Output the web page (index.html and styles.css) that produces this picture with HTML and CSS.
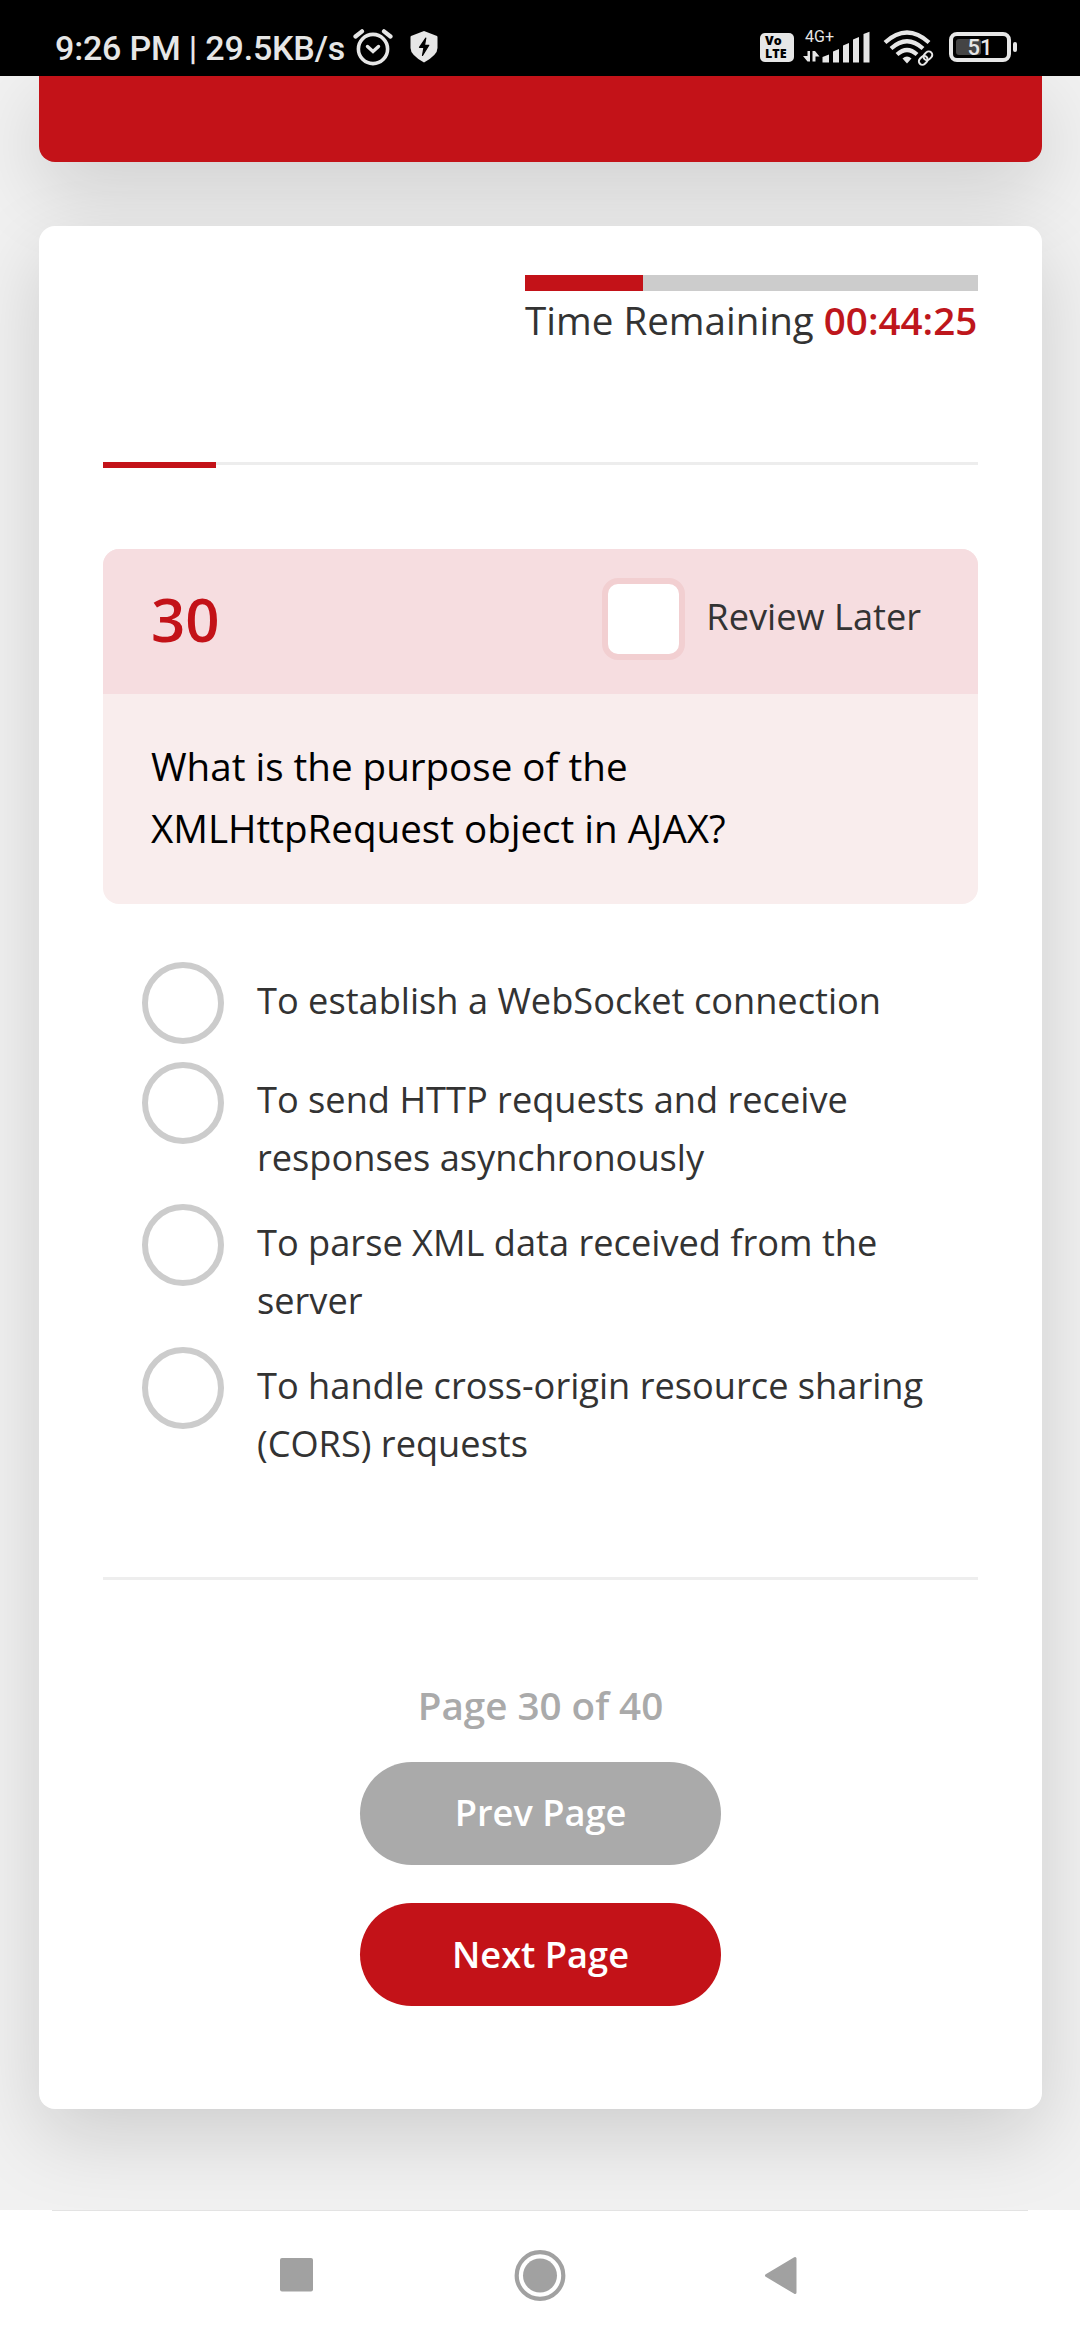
FILE: index.html
```html
<!DOCTYPE html>
<html lang="en">
<head>
<meta charset="utf-8">
<title>Quiz</title>
<link rel="stylesheet" href="styles.css">
</head>
<body>
<header class="status">
  <div class="status-left">
    <span class="clock">9:26 PM | 29.5KB/s</span>
    <svg class="alarm" width="40" height="40" viewBox="0 0 40 40" fill="none" stroke="#e6e6e6">
      <circle cx="20" cy="21" r="14.6" stroke-width="3.6"/>
      <path d="M2.5 8.5L9 3.3M37.500 8.500L31 3.300" stroke-width="4.200" stroke-linecap="round"/>
      <path d="M14.500 18.500L20 23.500L25.500 18.500" stroke-width="3.400" stroke-linecap="round"/>
    </svg>
    <svg class="shield" width="28" height="34" viewBox="0 0 28 34">
      <path d="M14 1L27 6Q27.500 6.300 27.500 7.500V18Q27.500 25 14 32.500Q.5 25 .5 18V7.500Q.5 6.300 1 6Z" fill="#e6e6e6"/>
      <path d="M15.800 8L9.500 17.300H14L12.500 25.500L18.800 15.300H14.500Z" fill="#000" stroke="#000" stroke-width="1.200" stroke-linejoin="round"/>
    </svg>
  </div>
  <div class="status-right">
    <div class="volte"><span>Vo</span><span>LTE</span></div>
    <div class="cell">
      <span class="net">4G+</span>
      <svg width="68" height="36" viewBox="0 0 68 36" fill="#e6e6e6">
        <path d="M0 26L4.500 26V21H7V31.500H4.500Z M9.500 21H12L16.500 26.500H12.500V31.500H9.500Z"/>
        <path d="M19.500 27L26 24.500V32.500H19.500Z M30 21.500L36 19V32.500H30Z M40 15.500L46 13V32.500H40Z M50 9.500L56 7V32.500H50Z M60.500 4L66.500 1.800V32.500H60.500Z"/>
      </svg>
    </div>
    <svg class="wifi" width="52" height="38" viewBox="0 0 52 38" fill="none" stroke="#e6e6e6" stroke-width="4.200">
      <path d="M2 13.500Q24-6.500 46 13.500"/>
      <path d="M8 19.500Q24 5 40 19.500"/>
      <path d="M14 25.500Q24 16.500 34 25.500"/>
      <path d="M19.500 29.500Q24 25.500 28.500 29.500L24 34.500Z" fill="#e6e6e6" stroke="none"/>
      <g stroke="#000" stroke-width="6"><path d="M40 30L45 24"/></g>
      <g stroke-width="2" transform="rotate(-45 42.500 29)">
        <rect x="34.500" y="25.600" width="9.500" height="7" rx="3.500"/>
        <rect x="41" y="25.600" width="9.500" height="7" rx="3.500"/>
      </g>
    </svg>
    <div class="battery"><div class="shell"><div class="charge"></div><span>51</span></div><i class="tip"></i></div>
  </div>
</header>
<main class="page">
  <section class="banner"></section>
  <section class="card">
    <div class="timer">
      <div class="timer-track"><div class="timer-fill" style="width:26%"></div></div>
      <p class="timer-text">Time Remaining <b>00:44:25</b></p>
    </div>
    <div class="progress"><div class="progress-fill" style="width:12.9%"></div></div>
    <div class="question">
      <div class="question-head">
        <span class="number">30</span>
        <label class="review"><span class="checkbox"></span><span class="review-text">Review Later</span></label>
      </div>
      <p class="question-text">What is the purpose of the<br>XMLHttpRequest object in AJAX?</p>
    </div>
    <ul class="options">
      <li><span class="radio"></span><span class="answer">To establish a WebSocket connection</span></li>
      <li><span class="radio"></span><span class="answer">To send HTTP requests and receive<br>responses asynchronously</span></li>
      <li><span class="radio"></span><span class="answer">To parse XML data received from the<br>server</span></li>
      <li><span class="radio"></span><span class="answer">To handle cross-origin resource sharing<br>(CORS) requests</span></li>
    </ul>
    <div class="pager">
      <p class="page-count">Page 30 of 40</p>
      <button class="btn prev">Prev Page</button>
      <button class="btn next">Next Page</button>
    </div>
  </section>
</main>
<nav class="nav">
  <div class="nav-line"></div>
  <div class="nav-buttons">
    <svg width="52" height="52" viewBox="0 0 52 52"><rect x="10" y="9" width="33" height="33.500" rx="2" fill="#a1a1a1"/></svg>
    <svg width="52" height="52" viewBox="0 0 52 52"><circle cx="26" cy="26.500" r="23.300" fill="none" stroke="#a1a1a1" stroke-width="4.200"/><circle cx="26" cy="26.500" r="17" fill="#a1a1a1"/></svg>
    <svg width="52" height="52" viewBox="0 0 52 52"><path d="M8.500 26.500L37 9.500V43.500Z" fill="#a1a1a1" stroke="#a1a1a1" stroke-width="3" stroke-linejoin="round"/></svg>
  </div>
</nav>
</body>
</html>
```
FILE: styles.css
```css
* { box-sizing: border-box; }
body {
  margin: 0;
  width: 1080px;
  height: 2340px;
  overflow: hidden;
  display: flex;
  flex-direction: column;
  background: #f1f1f1;
  color: #333;
  font-family: "Open Sans", "Noto Sans", sans-serif;
}
p, ul { margin: 0; padding: 0; }

/* status bar */
.status {
  position: relative;
  z-index: 1;
  flex: none;
  height: 76px;
  padding: 28px 63px 0 55px;
  display: flex;
  justify-content: space-between;
  background: #000;
  color: #e6e6e6;
  font-family: Roboto, sans-serif;
}
.status-left, .status-right { display: flex; align-items: flex-start; }
.clock { width: 292px; font-size: 34px; line-height: 41px; font-weight: 500; letter-spacing: -.18px; white-space: nowrap; }
.alarm { margin-left: 6px; }
.shield { margin-left: 17px; margin-top: 2px; }
.volte {
  width: 34px;
  height: 29px;
  margin-top: 5px;
  padding-top: 2px;
  border-radius: 5px;
  background: #e6e6e6;
  color: #000;
  display: flex;
  flex-direction: column;
  font: 800 12.500px/12.500px "Open Sans", sans-serif;
}
.volte span { padding-left: 5px; }
.cell { position: relative; width: 68px; margin-left: 9px; margin-top: 2px; }
.cell svg { display: block; }
.net { position: absolute; left: 2px; top: -1px; font-size: 16px; line-height: 16px; }
.wifi { margin-left: 12px; margin-top: 1px; }
.battery { display: flex; align-items: center; margin-left: 14px; margin-top: 4px; }
.shell {
  position: relative;
  width: 62px;
  height: 30px;
  border: 4px solid #e6e6e6;
  border-radius: 8px;
  text-align: center;
  font-size: 22px;
  line-height: 24px;
  font-weight: 500;
}
.charge { position: absolute; left: 3px; top: 3px; width: 25px; height: 16px; border-radius: 3px; background: #444; }
.shell span { position: relative; }
.tip { width: 4px; height: 10px; margin-left: 2px; border-radius: 2px; background: #e6e6e6; }

/* quiz page */
.page { flex: none; height: 2134px; padding: 0 38px 0 39px; overflow: hidden; }
.banner {
  height: 86px;
  border-radius: 0 0 16px 16px;
  background: #c31218;
  box-shadow: 0 27px 80px rgba(0, 0, 0, .15);
}
.card {
  height: 1883px;
  margin-top: 64px;
  padding: 49px 64px 0;
  border-radius: 16px;
  background: #fff;
  box-shadow: 0 27px 80px rgba(0, 0, 0, .15);
}
.timer { width: 453px; height: 187px; margin-left: auto; }
.timer-track { height: 16px; background: #ccc; }
.timer-fill { height: 16px; background: #c31218; }
.timer-text { font-size: 38.600px; line-height: 59px; white-space: nowrap; }
.timer-text b { font-weight: 600; color: #be161c; }
.progress { height: 3px; background: #ededed; }
.progress-fill { height: 6px; background: #c31218; }
.question { height: 355px; margin-top: 84px; border-radius: 16px; overflow: hidden; background: #f9eded; color: #000; }
.question-head {
  height: 145px;
  padding: 0 57px 0 48px;
  display: flex;
  justify-content: space-between;
  background: #f6dde0;
}
.number { font-size: 60px; line-height: 140px; font-weight: 600; color: #c31218; }
.review { display: flex; padding-top: 29px; color: #333; }
.checkbox { width: 83px; height: 82px; border: 6px solid #f2cfd1; border-radius: 16px; background: #fff; }
.review-text { margin-left: 21px; font-size: 36.200px; line-height: 76px; white-space: nowrap; }
.question-text { padding: 41px 48px 0; font-size: 38.550px; line-height: 62px; }
.options { list-style: none; height: 615px; margin-top: 58px; padding-left: 39px; }
.options li { display: flex; }
.options li:first-child { height: 100px; }
.options li:not(:first-child) { height: 143px; }
.radio { flex: none; width: 82px; height: 82px; border: 6px solid #ccc; border-radius: 50%; }
.options li:nth-child(n+3) .radio { margin-top: -1px; }
.answer { margin: 8px 0 0 33px; font-size: 36.200px; line-height: 58px; white-space: nowrap; }
.options li:first-child .answer { margin-top: 9px; }
.pager {
  border-top: 3px solid #eee;
  padding-top: 95px;
  display: flex;
  flex-direction: column;
  align-items: center;
}
.page-count { font-size: 38.600px; line-height: 60px; font-weight: 600; color: #aaa; }
.btn {
  width: 361px;
  height: 103px;
  padding: 0;
  border: 0;
  border-radius: 52px;
  color: #fff;
  font: 600 36.200px/103px "Open Sans", sans-serif;
}
.prev { margin-top: 27px; padding-bottom: 2px; line-height: 101px; background: #aaa; }
.next { margin-top: 38px; background: #c31218; }

/* system navigation */
.nav { flex: none; height: 130px; background: #fff; }
.nav-line { height: 1px; margin: 0 52px; background: #e3e3e3; }
.nav-buttons { display: flex; justify-content: space-between; width: 540px; margin: 38px auto 0; }
```
